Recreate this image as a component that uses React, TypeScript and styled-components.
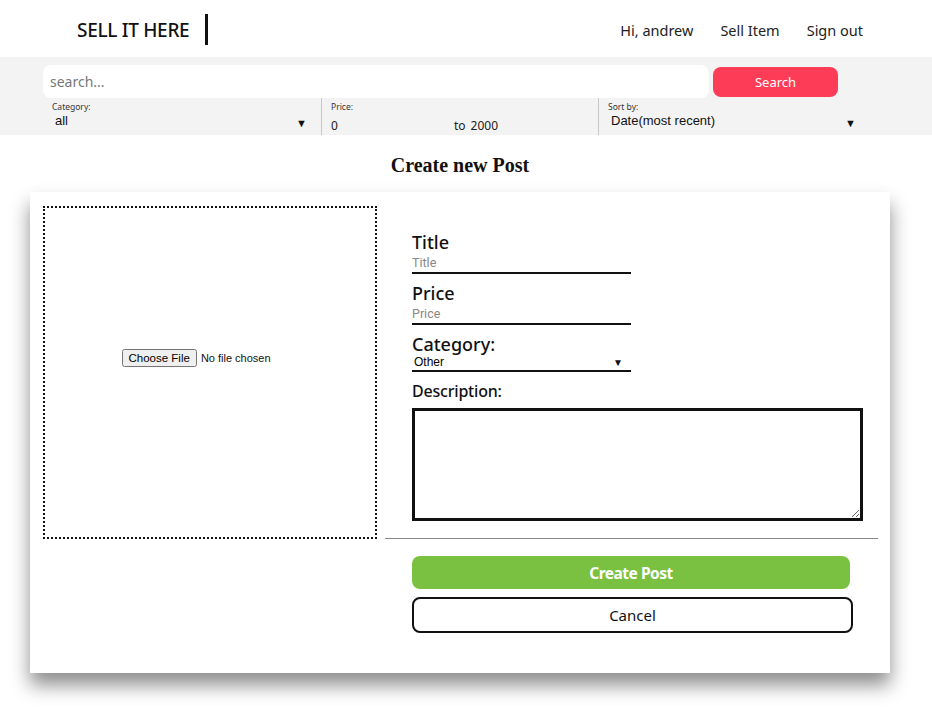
import { createGlobalStyle } from 'styled-components';
import styled from 'styled-components';

const GlobalStyle = createGlobalStyle`
  html, body {
    margin: 0;
    padding: 0;
    background: #fff;
    font-family: 'Noto Sans', 'Open Sans', sans-serif;
    color: #111;
  }
  * { box-sizing: border-box; }
`;

export default function App() {
  return (
    <Page>
      <GlobalStyle />
      <Header>
        <Logo>SELL IT HERE</Logo>
        <LogoBar />
        <Nav>
          <NavLink>Hi, andrew</NavLink>
          <NavLink>Sell Item</NavLink>
          <NavLink>Sign out</NavLink>
        </Nav>
      </Header>

      <SearchArea>
        <SearchRow>
          <SearchInput placeholder="search..." />
          <SearchBtn>Search</SearchBtn>
        </SearchRow>
        <Filters>
          <Filter>
            <FilterLabel>Category:</FilterLabel>
            <SelectWrap>
              <FilterSelect defaultValue="all">
                <option value="all">all</option>
              </FilterSelect>
              <Arrow>▼</Arrow>
            </SelectWrap>
          </Filter>
          <Filter divider>
            <FilterLabel>Price:</FilterLabel>
            <PriceRow>
              <PriceInput defaultValue="0" />
              <span>to</span>
              <PriceInput defaultValue="2000" />
            </PriceRow>
          </Filter>
          <Filter divider>
            <FilterLabel>Sort by:</FilterLabel>
            <SelectWrap>
              <FilterSelect defaultValue="date">
                <option value="date">Date(most recent)</option>
              </FilterSelect>
              <Arrow>▼</Arrow>
            </SelectWrap>
          </Filter>
        </Filters>
      </SearchArea>

      <Main>
        <Heading>Create new Post</Heading>
        <Card>
          <DropZone>
            <FileInput type="file" />
          </DropZone>
          <Right>
            <Form>
              <Label>Title</Label>
              <LineInput placeholder="Title" />
              <Label>Price</Label>
              <LineInput placeholder="Price" />
              <Label>Category:</Label>
              <SelectLine>
                <PostSelect defaultValue="other">
                  <option value="other">Other</option>
                </PostSelect>
                <SmallArrow>▼</SmallArrow>
              </SelectLine>
              <DescLabel>Description:</DescLabel>
              <TextArea />
            </Form>
            <Divider />
            <Buttons>
              <CreateBtn>Create Post</CreateBtn>
              <CancelBtn>Cancel</CancelBtn>
            </Buttons>
          </Right>
        </Card>
      </Main>
    </Page>
  );
}

/* header */

const Page = styled.div`
  width: 932px;
  min-height: 718px;
  padding-bottom: 40px;
`;

const Header = styled.header`
  display: flex;
  align-items: center;
  height: 57px;
  padding: 2px 69px 0 77px;
`;

const Logo = styled.div`
  font-size: 19px;
  font-weight: 500;
  letter-spacing: -0.3px;
`;

const LogoBar = styled.div`
  width: 3px;
  height: 31px;
  background: #111;
  margin-left: 16px;
`;

const Nav = styled.nav`
  margin-left: auto;
  display: flex;
  gap: 27px;
`;

const NavLink = styled.a`
  font-size: 14.5px;
  color: #222;
  cursor: pointer;
`;

/* search */

const SearchArea = styled.section`
  background: #f3f3f3;
  padding: 8px 0 0 43px;
`;

const SearchRow = styled.div`
  display: flex;
  align-items: center;
  gap: 4px;
`;

const SearchInput = styled.input`
  width: 666px;
  height: 33px;
  border: none;
  border-radius: 8px;
  background: #fff;
  padding: 0 7px;
  font-family: inherit;
  font-size: 14px;
  outline: none;
  &::placeholder { color: #777; }
`;

const SearchBtn = styled.button`
  width: 125px;
  height: 30px;
  border: none;
  border-radius: 8px;
  background: #fd3d57;
  color: #fff;
  font-family: inherit;
  font-size: 13px;
`;

const Filters = styled.div`
  display: grid;
  grid-template-columns: 278px 277px 272px;
  height: 37px;
`;

const Filter = styled.div<{ divider?: boolean }>`
  display: flex;
  flex-direction: column;
  padding: 3px 0 0 9px;
  border-left: ${p => (p.divider ? '1px solid #c8c8c8' : 'none')};
`;

const FilterLabel = styled.div`
  font-size: 8.5px;
  line-height: 11px;
  color: #333;
`;

const SelectWrap = styled.div`
  position: relative;
  display: flex;
`;

const FilterSelect = styled.select`
  appearance: none;
  flex: 1;
  border: none;
  background: transparent;
  font-family: 'Liberation Sans', Arial, sans-serif;
  font-size: 13px;
  color: #111;
  padding: 1px 0 0 3px;
  outline: none;
`;

const Arrow = styled.span`
  position: absolute;
  right: 14px;
  top: 3px;
  font-size: 11px;
  pointer-events: none;
`;

const PriceRow = styled.div`
  display: flex;
  align-items: center;
  font-size: 12px;
  padding-top: 5px;
  color: #222;
`;

const PriceInput = styled.input`
  width: 123px;
  border: none;
  background: transparent;
  font-family: inherit;
  font-size: 12px;
  color: #222;
  padding: 0;
  outline: none;
  & + span { margin-right: 5px; }
  &:last-child { width: 100px; }
`;

/* main */

const Main = styled.main`
  width: 860px;
  margin-left: 30px;
`;

const Heading = styled.h2`
  margin: 19px 0 15px;
  text-align: center;
  font-family: 'Liberation Serif', 'Times New Roman', serif;
  font-size: 20px;
  line-height: 23px;
  font-weight: 700;
`;

const Card = styled.div`
  display: grid;
  grid-template-columns: 334px 1fr;
  column-gap: 8px;
  padding: 14px 13px 40px;
  background: #fff;
  box-shadow: 0 12px 18px rgba(0, 0, 0, 0.45);
`;

const DropZone = styled.div`
  height: 333px;
  border: 2px dotted #111;
  display: flex;
  align-items: flex-start;
  justify-content: center;
  padding-top: 141px;
`;

const FileInput = styled.input`
  font-family: 'Liberation Sans', Arial, sans-serif;
  font-size: 11px;
  width: 160px;
  margin-right: 17px;
  &::file-selector-button {
    font-family: 'Liberation Sans', Arial, sans-serif;
    font-size: 11.5px;
    padding: 1px 5px;
    margin-right: 4px;
  }
`;

const Right = styled.div`
  display: flex;
  flex-direction: column;
`;

const Form = styled.div`
  height: 332px;
  display: flex;
  flex-direction: column;
  align-items: flex-start;
  padding: 25px 15px 0 27px;
`;

const Label = styled.label`
  font-size: 18px;
  font-weight: 500;
  line-height: 22px;
`;

const LineInput = styled.input`
  width: 219px;
  height: 21px;
  border: none;
  border-bottom: 2px solid #111;
  padding: 0;
  margin-bottom: 8px;
  font-family: Roboto, 'Liberation Sans', sans-serif;
  font-size: 12.5px;
  outline: none;
  &::placeholder { color: #888; }
`;

const SelectLine = styled.div`
  position: relative;
  width: 219px;
  height: 17px;
  border-bottom: 2px solid #111;
  margin-bottom: 9px;
`;

const PostSelect = styled.select`
  appearance: none;
  display: block;
  width: 100%;
  height: 15px;
  border: none;
  background: transparent;
  font-family: 'Liberation Sans', Arial, sans-serif;
  font-size: 12px;
  padding: 0 0 0 2px;
  line-height: 15px;
  outline: none;
`;

const SmallArrow = styled.span`
  position: absolute;
  right: 8px;
  top: 0;
  font-size: 10px;
  line-height: 15px;
  pointer-events: none;
`;

const DescLabel = styled.label`
  font-size: 16px;
  font-weight: 500;
  line-height: 20px;
  margin-bottom: 7px;
  letter-spacing: -0.2px;
`;

const TextArea = styled.textarea`
  width: 451px;
  height: 113px;
  border: 3px solid #111;
  resize: both;
  outline: none;
`;

const Divider = styled.hr`
  margin: 0;
  border: none;
  border-top: 1px solid #888;
`;

const Buttons = styled.div`
  display: flex;
  flex-direction: column;
  gap: 8px;
  padding: 17px 0 0 27px;
`;

const CreateBtn = styled.button`
  width: 438px;
  height: 33px;
  border: none;
  border-radius: 8px;
  background: #7ac142;
  color: #fff;
  font-family: inherit;
  font-size: 15.5px;
  font-weight: 700;
  letter-spacing: -0.5px;
`;

const CancelBtn = styled.button`
  width: 441px;
  height: 36px;
  border: 2px solid #111;
  border-radius: 8px;
  background: #fff;
  color: #111;
  font-family: inherit;
  font-size: 15px;
`;
